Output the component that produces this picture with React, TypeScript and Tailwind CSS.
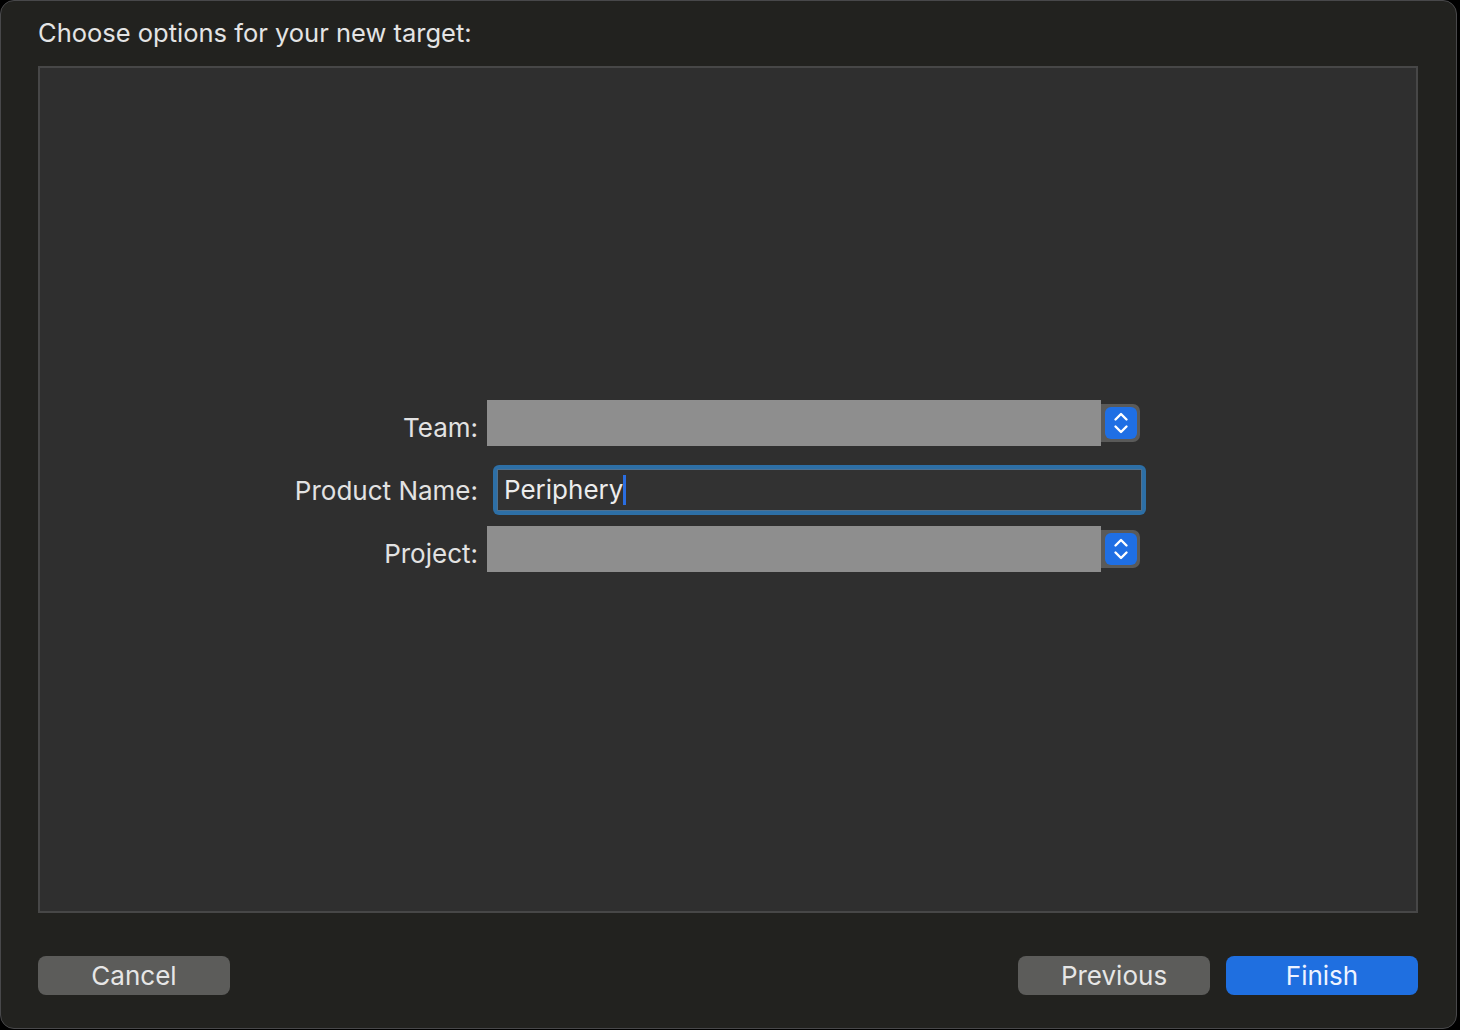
import React from "react";

function Stepper() {
  return (
    <div className="flex h-[38px] w-[39px] items-center justify-center rounded-r-[7px] bg-[#5a5a59]">
      <div className="flex h-[32px] w-[32px] items-center justify-center rounded-[6px] bg-[#1f6fe4]">
        <svg width="20" height="28" viewBox="0 0 20 28" fill="none">
          <path d="M4.5 10.5 L10 5 L15.5 10.5" stroke="white" strokeWidth="2.4" strokeLinecap="round" strokeLinejoin="round" />
          <path d="M4.5 17.5 L10 23 L15.5 17.5" stroke="white" strokeWidth="2.4" strokeLinecap="round" strokeLinejoin="round" />
        </svg>
      </div>
    </div>
  );
}

function PopupRow({ label }: { label: string }) {
  return (
    <div className="flex h-[46px] items-center">
      <div className="w-[438px] pt-[8px] text-right text-[26px] text-[#e2e2e2]">{label}</div>
      <div className="ml-[9px] flex items-center">
        <div className="h-[46px] w-[614px] bg-[#8e8e8e]" />
        <Stepper />
      </div>
    </div>
  );
}

export default function App() {
  return (
    <div className="h-[1030px] w-[1460px] bg-black" style={{ fontFamily: "Inter, 'Liberation Sans', sans-serif" }}>
      <div className="flex h-[1029px] w-[1457px] flex-col rounded-[14px] border border-[#48484a] bg-[#22221f] pl-[37px]">
        <div className="h-[65px] pt-[15px] text-[25.5px] leading-[34px] text-[#e4e4e4]">Choose options for your new target:</div>
        <div className="flex h-[847px] w-[1380px] flex-col border-2 border-[#474747] bg-[#2f2f2f] pt-[332px]">
          <PopupRow label="Team:" />
          <div className="mt-[19px] flex h-[50px] items-center">
            <div className="w-[438px] text-right text-[26px] text-[#e2e2e2]">Product Name:</div>
            <div className="ml-[15px] h-[50px] w-[653px] rounded-[6px] bg-[#2d6fa6] p-[4px]">
              <div className="flex h-full w-full items-center border border-[#4f7190] bg-[#323232] pl-[6px]">
                <span className="text-[26px] leading-none text-[#ececec]">Periphery</span>
                <span className="h-[30px] w-[3px] bg-[#2a6de0]" />
              </div>
            </div>
          </div>
          <div className="mt-[11px]">
            <PopupRow label="Project:" />
          </div>
        </div>
        <div className="mt-[43px] flex w-[1380px] items-center justify-between">
          <button className="h-[39px] w-[192px] rounded-[8px] bg-[#5c5c5a] text-[26px] leading-none text-[#e6e6e6]">Cancel</button>
          <div className="flex gap-[16px]">
            <button className="h-[39px] w-[192px] rounded-[8px] bg-[#5c5c5a] text-[26px] leading-none text-[#e6e6e6]">Previous</button>
            <button className="h-[39px] w-[192px] rounded-[8px] bg-[#1f6fe0] text-[26px] leading-none text-[#eef3ff]">Finish</button>
          </div>
        </div>
      </div>
    </div>
  );
}
